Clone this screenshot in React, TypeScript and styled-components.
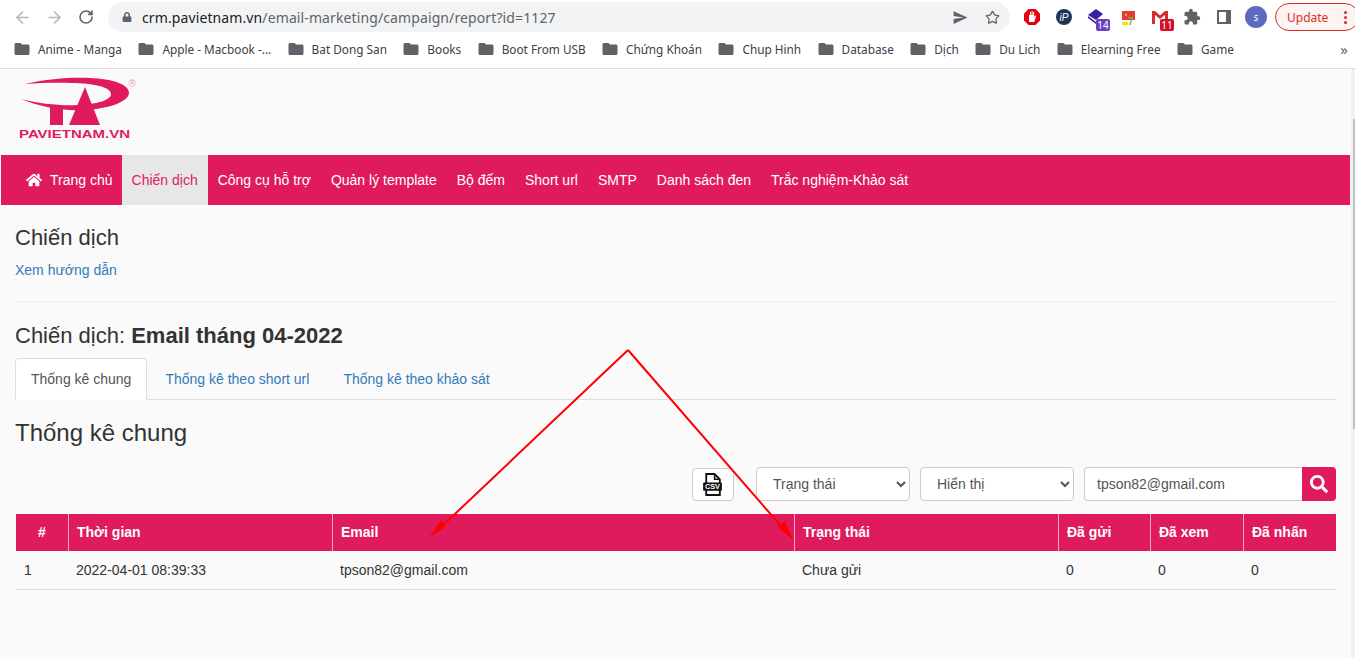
import React from 'react';
import styled, { createGlobalStyle } from 'styled-components';
import { ArrowLeft, ArrowRight, RotateCw, Star } from 'lucide-react';
import { FaHome, FaSearch, FaLock } from 'react-icons/fa';
import { IoMdSend } from 'react-icons/io';
import { MdExtension, MdFolder } from 'react-icons/md';

const PINK = '#df1b5d';

const bookmarks = [
  'Anime - Manga',
  'Apple - Macbook -...',
  'Bat Dong San',
  'Books',
  'Boot From USB',
  'Chứng Khoán',
  'Chup Hinh',
  'Database',
  'Dịch',
  'Du Lich',
  'Elearning Free',
  'Game',
];

const menu = [
  'Chiến dịch',
  'Công cụ hỗ trợ',
  'Quản lý template',
  'Bộ đếm',
  'Short url',
  'SMTP',
  'Danh sách đen',
  'Trắc nghiệm-Khảo sát',
];

const columns = [
  { title: '#', width: 52 },
  { title: 'Thời gian', width: 264 },
  { title: 'Email', width: 462 },
  { title: 'Trạng thái', width: 264 },
  { title: 'Đã gửi', width: 92 },
  { title: 'Đã xem', width: 93 },
  { title: 'Đã nhấn', width: 93 },
];

const row = ['1', '2022-04-01 08:39:33', 'tpson82@gmail.com', 'Chưa gửi', '0', '0', '0'];

const GlobalStyle = createGlobalStyle`
  html, body {
    margin: 0;
    height: 659px;
    overflow: hidden;
    background: #fafafa;
  }
  * { box-sizing: border-box; }
`;

const Shell = styled.div`
  width: 1355px;
  height: 659px;
  position: relative;
  overflow: hidden;
  font-family: "Liberation Sans", Arial, sans-serif;
  font-size: 14px;
  color: #333;
`;

const BrowserBar = styled.header`
  height: 69px;
  background: #fff;
  border-bottom: 1px solid #dadce0;
  font-family: "Noto Sans", sans-serif;
`;

const Toolbar = styled.div`
  height: 34px;
  display: flex;
  align-items: center;
  padding-left: 6px;
  overflow: hidden;
  & > * { flex-shrink: 0; }
`;

const NavIcon = styled.span<{ $dim?: boolean }>`
  width: 32px;
  height: 32px;
  display: flex;
  align-items: center;
  justify-content: center;
  color: ${(p) => (p.$dim ? '#b4b7bb' : '#5f6368')};
`;

const Omnibox = styled.div`
  width: 902px;
  height: 30px;
  margin-left: 6px;
  border-radius: 15px;
  background: #f1f3f4;
  display: flex;
  align-items: center;
  padding: 0 2px 0 14px;
  color: #5f6368;
`;

const Url = styled.div`
  flex: 1;
  margin-left: 10px;
  font-size: 14px;
  color: #5f6368;
  letter-spacing: 0.11px;
  b {
    font-weight: 400;
    color: #202124;
  }
`;

const OmniAction = styled.span`
  width: 32px;
  display: flex;
  justify-content: center;
  color: #5f6368;
`;

const Extensions = styled.div`
  display: flex;
  margin-left: 6px;
`;

const ExtSlot = styled.div`
  position: relative;
  width: 32px;
  height: 32px;
  display: flex;
  align-items: center;
  justify-content: center;
  color: #5f6368;
`;

const Badge = styled.span<{ $bg: string }>`
  position: absolute;
  right: 2px;
  bottom: 2px;
  width: 14px;
  height: 12px;
  border-radius: 2px;
  background: ${(p) => p.$bg};
  color: #fff;
  font-size: 10px;
  line-height: 12px;
  text-align: center;
`;

const Avatar = styled.span`
  width: 22px;
  height: 22px;
  border-radius: 50%;
  background: #5c6bc0;
  color: #fff;
  font-size: 10px;
  display: flex;
  align-items: center;
  justify-content: center;
`;

const UpdateButton = styled.div`
  width: 84px;
  height: 28px;
  margin-left: 3px;
  border: 1px solid #d93025;
  border-radius: 14px;
  background: #fdf3f2;
  color: #d93025;
  font-size: 12px;
  display: flex;
  align-items: center;
  padding-left: 11px;
`;

const MoreDots = styled.span`
  width: 3px;
  height: 3px;
  margin-left: 16px;
  border-radius: 50%;
  background: #d93025;
  box-shadow: 0 -5px 0 #d93025, 0 5px 0 #d93025;
`;

const Bookmarks = styled.div`
  height: 34px;
  padding: 0 0 4px 13px;
  display: flex;
  align-items: center;
  gap: 15.4px;
  position: relative;
`;

const Bookmark = styled.div`
  display: flex;
  align-items: center;
  gap: 7px;
  font-size: 11.8px;
  color: #3c4043;
  white-space: nowrap;
  svg { color: #5f6368; }
`;

const Overflow = styled.span`
  position: absolute;
  right: 7px;
  top: 5px;
  color: #5f6368;
  font-size: 15px;
`;

const Viewport = styled.div`
  display: flex;
  height: 590px;
`;

const Page = styled.main`
  width: 1351px;
  background: #fafafa;
`;

const ScrollTrack = styled.div`
  width: 4px;
  background: #f1f1f1;
  padding: 50px 0 0 2px;
`;

const ScrollThumb = styled.div`
  width: 2px;
  height: 310px;
  background: #c1c1c1;
`;

const LogoBar = styled.div`
  height: 86px;
  padding: 6px 0 0 15px;
`;

const MainNav = styled.nav`
  height: 50px;
  margin: 0 1px;
  padding-left: 15px;
  background: ${PINK};
  display: flex;
`;

const NavItem = styled.a<{ $active?: boolean }>`
  display: flex;
  align-items: center;
  gap: 8px;
  padding: 0 10px;
  color: ${(p) => (p.$active ? PINK : '#fff')};
  background: ${(p) => (p.$active ? '#e7e7e7' : 'transparent')};
  white-space: nowrap;
`;

const HomeItem = styled(NavItem)`
  padding-right: 9px;
`;

const Content = styled.div`
  padding: 0 15px;
`;

const PageTitle = styled.h3`
  margin: 20px 0 0;
  font-size: 22px;
  line-height: 26px;
  font-weight: 400;
`;

const HelpLink = styled.a`
  display: block;
  margin-top: 9px;
  line-height: 20px;
  color: #337ab7;
`;

const Divider = styled.hr`
  margin: 21px 0 20px;
  border: 0;
  border-top: 1px solid #eee;
`;

const CampaignTitle = styled.h3`
  margin: 0 0 9px;
  font-size: 22px;
  line-height: 27px;
  font-weight: 400;
  b { font-weight: 700; }
`;

const Tabs = styled.ul`
  margin: 0;
  padding: 0;
  list-style: none;
  display: flex;
  gap: 2px;
  height: 42px;
  border-bottom: 1px solid #ddd;
`;

const Tab = styled.li<{ $active?: boolean }>`
  height: 42px;
  padding: 0 15px;
  line-height: 40px;
  border: 1px solid ${(p) => (p.$active ? '#ddd' : 'transparent')};
  border-bottom-color: ${(p) => (p.$active ? '#fff' : 'transparent')};
  border-radius: 4px 4px 0 0;
  background: ${(p) => (p.$active ? '#fff' : 'transparent')};
  color: ${(p) => (p.$active ? '#555' : '#337ab7')};
`;

const SectionTitle = styled.h3`
  margin: 18px 0 0;
  font-size: 24px;
  line-height: 30px;
  font-weight: 400;
`;

const Filters = styled.div`
  display: flex;
  justify-content: flex-end;
  margin-top: 19px;
  height: 34px;
`;

const CsvButton = styled.button`
  width: 42px;
  height: 33px;
  margin: 1px 22px 0 0;
  padding: 0;
  border: 1px solid #ccc;
  border-radius: 4px;
  background: #fff;
  display: flex;
  align-items: center;
  justify-content: center;
`;

const Select = styled.select`
  width: 154px;
  height: 34px;
  margin-right: 10px;
  padding: 0 12px;
  border: 1px solid #ccc;
  border-radius: 4px;
  background: #fff;
  color: #555;
  font: 14px "Liberation Sans", Arial, sans-serif;
`;

const SearchGroup = styled.div`
  display: flex;
  width: 252px;
`;

const SearchInput = styled.input`
  flex: 1;
  min-width: 0;
  height: 34px;
  padding: 0 12px;
  border: 1px solid #ccc;
  border-right: 0;
  border-radius: 4px 0 0 4px;
  background: #fff;
  color: #555;
  font: 14px "Liberation Sans", Arial, sans-serif;
`;

const SearchButton = styled.button`
  width: 34px;
  height: 34px;
  padding: 0;
  border: 0;
  border-radius: 0 4px 4px 0;
  background: ${PINK};
  color: #fff;
  display: flex;
  align-items: center;
  justify-content: center;
`;

const ReportTable = styled.table`
  width: 1320px;
  margin: 13px 0 0 1px;
  border-collapse: collapse;
  table-layout: fixed;
`;

const HeadCell = styled.th<{ $center?: boolean }>`
  height: 37px;
  padding: 0 8px 2px 8.5px;
  background: ${PINK};
  color: #fff;
  font-size: 14px;
  font-weight: 700;
  text-align: ${(p) => (p.$center ? 'center' : 'left')};
  border-left: 1px solid #f2a9c2;
  &:first-child { border-left: 0; }
`;

const BodyCell = styled.td`
  height: 38px;
  padding: 0 8px;
  border-bottom: 1px solid #ddd;
`;

const Annotations = styled.svg`
  position: absolute;
  left: 0;
  top: 0;
  pointer-events: none;
`;

const Logo = () => (
  <svg width="125" height="66" viewBox="15 75 125 66">
    <path
      fill={PINK}
      d="M25 84C50 78 75 77 90 78C112 79 129 84 129 93C129 102 105 110 82 110C60 111 38 106 21 99C40 104 62 106 78 105C98 104 111 100 111 94C111 87 92 83 72 83C55 82.500 40 83 25 84Z"
    />
    <rect x="50" y="107" width="13" height="18" fill={PINK} />
    <polygon points="85,87 100,125 69,125" fill={PINK} />
    <text x="128.500" y="87" fontFamily="Liberation Sans" fontSize="10" fill="#eda3bd">®</text>
    <text
      x="19"
      y="138"
      fontFamily="Liberation Sans"
      fontWeight="700"
      fontSize="10"
      fill={PINK}
      textLength="111"
      lengthAdjust="spacingAndGlyphs"
    >
      PAVIETNAM.VN
    </text>
  </svg>
);

const CsvIcon = () => (
  <svg width="21" height="23" viewBox="0 0 20 22" style={{ marginLeft: -2 }}>
    <path d="M4 1h8l5 5v15H4z" fill="#fff" stroke="#111" strokeWidth="1.800" />
    <path d="M12 1v5h5" fill="none" stroke="#111" strokeWidth="1.500" />
    <rect x="1" y="9" width="18" height="8" rx="1" fill="#111" />
    <text x="10" y="15.500" textAnchor="middle" fontSize="7" fontWeight="700" fill="#fff" fontFamily="Liberation Sans">
      CSV
    </text>
  </svg>
);

const App = () => {
  return (
    <Shell>
      <GlobalStyle />
      <BrowserBar>
        <Toolbar>
          <NavIcon $dim><ArrowLeft size={19} /></NavIcon>
          <NavIcon $dim><ArrowRight size={19} /></NavIcon>
          <NavIcon><RotateCw size={16} strokeWidth={2.400} /></NavIcon>
          <Omnibox>
            <FaLock size={10} />
            <Url><b>crm.pavietnam.vn</b>/email-marketing/campaign/report?id=1127</Url>
            <OmniAction><IoMdSend size={17} /></OmniAction>
            <OmniAction><Star size={15} strokeWidth={2} /></OmniAction>
          </Omnibox>
          <Extensions>
            <ExtSlot>
              <svg width="32" height="32" viewBox="0 0 32 32">
                <polygon points="12.500,8 19.500,8 24,12.500 24,19.500 19.500,24 12.500,24 8,19.500 8,12.500" fill="#e60012" />
                <path d="M13 21v-7h1v-3h1v3h.6v-4h1v4h.6v-3h1v5l1-1.500 1 .6-2 5.900z" fill="#fff" />
              </svg>
            </ExtSlot>
            <ExtSlot>
              <svg width="32" height="32" viewBox="0 0 32 32">
                <circle cx="16" cy="16" r="8" fill="#1d3557" />
                <text x="16" y="19.500" textAnchor="middle" fontSize="10" fontStyle="italic" fill="#fff" fontFamily="Liberation Sans">
                  iP
                </text>
              </svg>
            </ExtSlot>
            <ExtSlot>
              <svg width="32" height="32" viewBox="0 0 32 32">
                <polygon points="8,14 16,8 23,13 16,19" fill="#3a1f9e" />
                <polygon points="8,17 16,23 20,20 20,18 16,21 8,15" fill="#3a1f9e" />
              </svg>
              <Badge $bg="#6a3fc4">14</Badge>
            </ExtSlot>
            <ExtSlot>
              <svg width="32" height="32" viewBox="0 0 32 32">
                <rect x="10" y="10" width="13" height="9" fill="#e53935" />
                <polygon points="14,12 15,15 12.500,13.200 15.500,13.200 13,15" fill="#ffeb3b" />
                <rect x="10" y="21" width="6" height="3" fill="#f4e300" />
                <text x="16" y="24" fontSize="10" fontWeight="700" fill="#6abf2e" fontFamily="Liberation Sans">7</text>
              </svg>
            </ExtSlot>
            <ExtSlot>
              <svg width="32" height="32" viewBox="0 0 32 32">
                <path d="M8 10h3l5 4.500L21 10h3v13h-3v-9l-5 4-5-4v9H8z" fill="#d32f2f" />
              </svg>
              <Badge $bg="#d50f25">11</Badge>
            </ExtSlot>
            <ExtSlot><MdExtension size={18} /></ExtSlot>
            <ExtSlot>
              <svg width="14" height="14" viewBox="0 0 14 14">
                <path fillRule="evenodd" d="M0 0h14v14H0zM2 2v10h7V2z" fill="#5f6368" />
              </svg>
            </ExtSlot>
            <ExtSlot><Avatar>s</Avatar></ExtSlot>
          </Extensions>
          <UpdateButton>Update<MoreDots /></UpdateButton>
        </Toolbar>
        <Bookmarks>
          {bookmarks.map((name) => (
            <Bookmark key={name}>
              <MdFolder size={18} />
              {name}
            </Bookmark>
          ))}
          <Overflow>»</Overflow>
        </Bookmarks>
      </BrowserBar>

      <Viewport>
        <Page>
          <LogoBar><Logo /></LogoBar>
          <MainNav>
            <HomeItem><FaHome size={16} />Trang chủ</HomeItem>
            {menu.map((label, i) => (
              <NavItem key={label} $active={i === 0}>{label}</NavItem>
            ))}
          </MainNav>
          <Content>
            <PageTitle>Chiến dịch</PageTitle>
            <HelpLink>Xem hướng dẫn</HelpLink>
            <Divider />
            <CampaignTitle>Chiến dịch: <b>Email tháng 04-2022</b></CampaignTitle>
            <Tabs>
              <Tab $active>Thống kê chung</Tab>
              <Tab>Thống kê theo short url</Tab>
              <Tab>Thống kê theo khảo sát</Tab>
            </Tabs>
            <SectionTitle>Thống kê chung</SectionTitle>
            <Filters>
              <CsvButton><CsvIcon /></CsvButton>
              <Select defaultValue="status"><option value="status">Trạng thái</option></Select>
              <Select defaultValue="show"><option value="show">Hiển thị</option></Select>
              <SearchGroup>
                <SearchInput defaultValue="tpson82@gmail.com" />
                <SearchButton><FaSearch size={18} /></SearchButton>
              </SearchGroup>
            </Filters>
            <ReportTable>
              <colgroup>
                {columns.map((c) => <col key={c.title} width={c.width} />)}
              </colgroup>
              <thead>
                <tr>
                  {columns.map((c, i) => <HeadCell key={c.title} $center={i === 0}>{c.title}</HeadCell>)}
                </tr>
              </thead>
              <tbody>
                <tr>
                  {row.map((v, i) => <BodyCell key={i}>{v}</BodyCell>)}
                </tr>
              </tbody>
            </ReportTable>
          </Content>
        </Page>
        <ScrollTrack><ScrollThumb /></ScrollTrack>
      </Viewport>

      {/* red callout arrows over the table header */}
      <Annotations width="1355" height="659" viewBox="0 0 1355 659">
        <path d="M628 350L437 531M628 350L787 533" fill="none" stroke="#f00" strokeWidth="2" />
        <polygon points="429,538 441,520 446,526" fill="#f00" />
        <polygon points="794,541 778,527 785,521" fill="#f00" />
      </Annotations>
    </Shell>
  );
};

export default App;
